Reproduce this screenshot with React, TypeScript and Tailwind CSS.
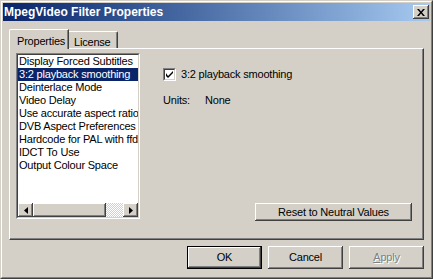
const ITEMS = [
  'Display Forced Subtitles',
  '3:2 playback smoothing',
  'Deinterlace Mode',
  'Video Delay',
  'Use accurate aspect ratio',
  'DVB Aspect Preferences',
  'Hardcode for PAL with ffdshow',
  'IDCT To Use',
  'Output Colour Space',
];

const RAISED =
  'shadow-[inset_-1px_-1px_0_#404040,inset_1px_1px_0_#ffffff,inset_-2px_-2px_0_#808080,inset_2px_2px_0_#d4d0c8]';

function Arrow({ dir }: { dir: 'left' | 'right' }) {
  return (
    <svg width="4" height="7" viewBox="0 0 4 7">
      {dir === 'left' ? <path d="M4 0 L0 3.5 L4 7 Z" fill="#000" /> : <path d="M0 0 L4 3.5 L0 7 Z" fill="#000" />}
    </svg>
  );
}

function ScrollButton({ dir }: { dir: 'left' | 'right' }) {
  return (
    <div className={`flex h-full w-[15px] items-center justify-center bg-[#d4d0c8] ${RAISED}`}>
      <Arrow dir={dir} />
    </div>
  );
}

function Button({
  label,
  isDefault = false,
  disabled = false,
  className = '',
}: {
  label: React.ReactNode;
  isDefault?: boolean;
  disabled?: boolean;
  className?: string;
}) {
  const face = (
    <div
      className={[
        'flex h-full w-full items-center justify-center bg-[#d4d0c8]',
        RAISED,
        disabled ? 'text-[#808080] [text-shadow:1px_1px_0_#ffffff]' : 'text-black',
      ].join(' ')}
    >
      {label}
    </div>
  );

  return (
    <div className={`${className} ${isDefault ? 'border border-black' : ''}`}>{face}</div>
  );
}

export default function App() {
  return (
    <div className="h-[279px] w-[433px] select-none border border-[#d4d0c8] border-r-[#404040] border-b-[#404040] bg-[#d4d0c8] font-['Liberation_Sans',Arial,sans-serif] text-[11px] tracking-[-0.2px] text-black">
      <div className="flex h-full flex-col border border-white border-r-[#808080] border-b-[#808080] p-px">
        {/* title bar */}
        <div className="flex h-[18px] items-center justify-between bg-linear-to-r from-[#0a246a] to-[#a6caf0] pl-[1px] pr-[1px]">
          <span className="text-[12px] font-bold tracking-normal text-white">MpegVideo Filter Properties</span>
          <div className={`flex h-[14px] w-[16px] items-center justify-center bg-[#d4d0c8] ${RAISED}`}>
            <svg width="8" height="7" viewBox="0 0 8 7">
              <path d="M0 0h2l2 2.5 2-2.5h2l-3 3.5 3 3.5h-2l-2-2.5-2 2.5h-2l3-3.5z" fill="#000" />
            </svg>
          </div>
        </div>

        <div className="flex flex-1 flex-col px-[6px] pt-[8px]">
          {/* tabs */}
          <div className="relative z-10 -mb-px flex h-[20px] items-end">
            <div className="flex h-[20px] w-[60px] items-start rounded-tl-[2px] border-t border-l border-white bg-[#d4d0c8] pt-[3px] pl-[7px] shadow-[inset_-1px_0_0_#808080] [border-right:1px_solid_#404040]">
              Properties
            </div>
            <div className="mb-px flex h-[17px] w-[49px] items-start rounded-tr-[2px] border-t border-white bg-[#d4d0c8] pt-[2px] pl-[5px] shadow-[inset_-1px_0_0_#808080] [border-right:1px_solid_#404040]">
              License
            </div>
          </div>

          {/* panel */}
          <div className="h-[192px] border border-white border-r-[#404040] border-b-[#404040]">
            <div className="flex h-full border-r border-b border-[#808080] pt-[4px] pl-[6px]">
              {/* listbox */}
              <div className="h-[166px] w-[124px] border border-[#808080] border-r-white border-b-white">
                <div className="flex h-full flex-col border border-[#404040] border-r-[#d4d0c8] border-b-[#d4d0c8] bg-white">
                  <div className="flex-1 overflow-hidden">
                    {ITEMS.map((item, index) => (
                      <div
                        className={[
                          'h-[13px] whitespace-nowrap pl-px leading-[13px]',
                          index === 1 ? 'bg-[#0a246a] text-white' : '',
                        ].join(' ')}
                        key={item}
                      >
                        {item}
                      </div>
                    ))}
                  </div>
                  <div className="flex h-[14px] bg-[#d4d0c8]">
                    <ScrollButton dir="left" />
                    <div className={`w-[73px] bg-[#d4d0c8] ${RAISED}`} />
                    <div className="flex-1 bg-[repeating-conic-gradient(#ffffff_0_25%,#d4d0c8_0_50%)] bg-[length:2px_2px]" />
                    <ScrollButton dir="right" />
                  </div>
                </div>
              </div>

              {/* settings */}
              <div className="flex flex-1 flex-col pt-[13px] pl-[23px] pr-[10px] pb-[17px]">
                <div className="flex items-center gap-[5px]">
                  <div className="flex h-[13px] w-[13px] items-center justify-center border border-[#808080] border-r-white border-b-white">
                    <div className="flex h-full w-full items-center justify-center border border-[#404040] border-r-[#d4d0c8] border-b-[#d4d0c8] bg-white">
                      <svg width="7" height="7" viewBox="0 0 7 7">
                        <path d="M0 2v3l2 2 5-5v-2l-5 5z" fill="#000" />
                      </svg>
                    </div>
                  </div>
                  <span>3:2 playback smoothing</span>
                </div>
                <div className="mt-[9px] flex">
                  <span className="w-[42px]">Units:</span>
                  <span>None</span>
                </div>
                <div className="flex-1" />
                <Button className="ml-auto h-[18px] w-[157px]" label="Reset to Neutral Values" />
              </div>
            </div>
          </div>

          {/* dialog buttons */}
          <div className="mt-[6px] flex justify-end gap-[6px]">
            <Button className="h-[23px] w-[75px]" isDefault label="OK" />
            <Button className="h-[23px] w-[75px]" label="Cancel" />
            <Button
              className="h-[23px] w-[75px]"
              disabled
              label={
                <span>
                  <span className="underline">A</span>pply
                </span>
              }
            />
          </div>
        </div>
      </div>
    </div>
  );
}
